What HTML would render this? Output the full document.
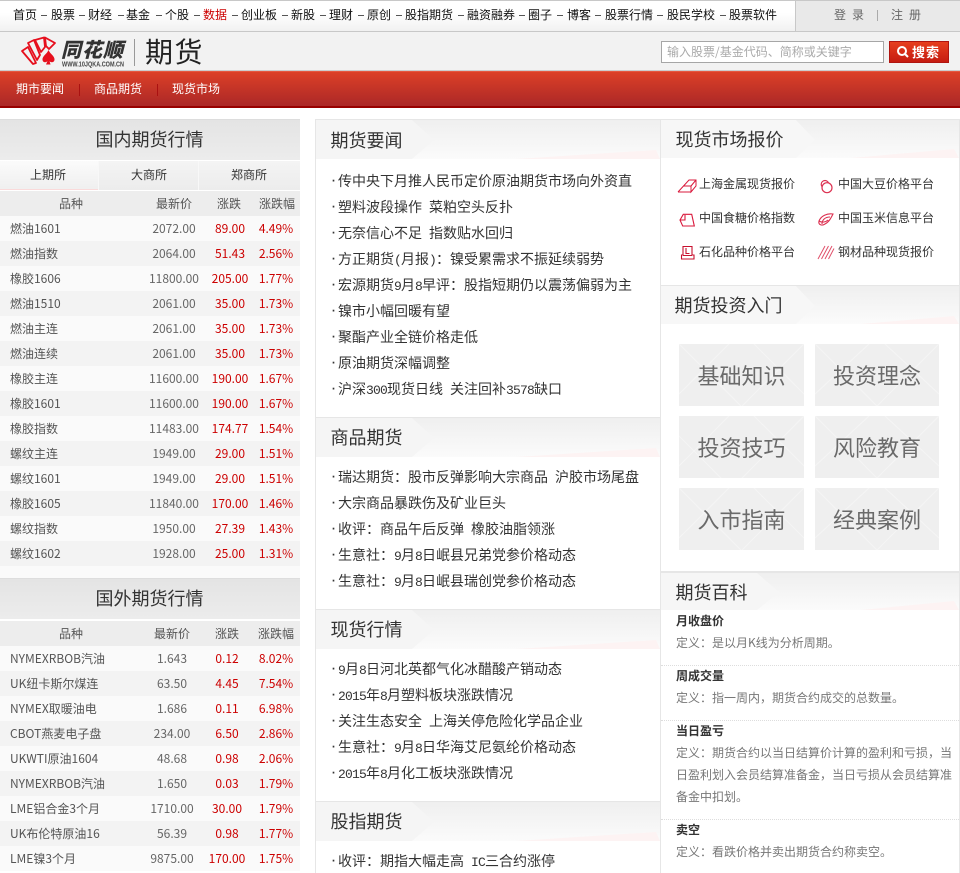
<!DOCTYPE html>
<html lang="zh"><head><meta charset="utf-8"><title>期货</title>
<style>
html,body{margin:0;padding:0}
body{width:960px;height:873px;overflow:hidden;position:relative;background:#fff;font:12px/20px "WenQuanYi Zen Hei","Noto Sans CJK SC",sans-serif;color:#333}
div,span,a{position:absolute;white-space:nowrap}
a{color:inherit;text-decoration:none}
.nv{top:5px;color:#111}
.dash{top:15px;width:6px;height:1px;background:#555}
.h18{font-size:18px;line-height:24px;color:#333;font-family:"Noto Sans CJK SC",sans-serif;font-weight:400;margin-left:-.5px}
.row{left:0;width:300px;height:25px;line-height:25px;color:#555}
.row span{top:0}
.o{background:#fafafa}.e{background:#f3f3f3}
.hd{background:#ededed;color:#555}
.row b{font:inherit}
.n{left:10px}
.p,.c,.f{text-align:center;width:100px}
.p{left:124px;color:#666}.c{left:180px;color:#c00}.f{left:226px;color:#c00}
.x .p{left:122px}.x .c{left:177px}.x .f{left:226px}
.li{left:338px;color:#333;font-size:14px}
.li::before{content:"·";position:absolute;left:-8px;top:0;font:bold 11.67px/20px "Liberation Mono",monospace}
tt{font:13px "Liberation Mono",monospace;letter-spacing:-.8px}
.ttl{height:39px;background:linear-gradient(#efefef,#fbfbfb)}
.ttl svg{position:absolute;left:0;top:0}
.tile{width:125px;height:62px;background:#efefef;overflow:hidden}
.tile svg{position:absolute;left:0;top:0}
.tile span{left:0;width:100%;top:16px;text-align:center;font:400 22px/30px "Noto Sans CJK SC",sans-serif;color:#6a6a6a}
.q{left:699px;color:#333}
.wk{left:676px;color:#333;font-weight:bold}
.df{left:676px;color:#777}
.dot{left:661px;width:298px;height:0;border-top:1px dotted #ddd}
.ic{position:absolute}
</style></head><body>

<!-- top bar -->
<div style="left:0;top:0;width:960px;height:30px;background:linear-gradient(#fff 40%,#f1f1f1);border-top:1px solid #c8c8c8;border-bottom:1px solid #c8c8c8"></div>
<div style="left:795px;top:1px;width:165px;height:30px;background:#e9e9e9;border-left:1px solid #c8c8c8"></div>
<a class="nv" style="left:13px">首页</a><i class="dash" style="position:absolute;left:41px"></i>
<a class="nv" style="left:51px">股票</a><i class="dash" style="position:absolute;left:79px"></i>
<a class="nv" style="left:88px">财经</a><i class="dash" style="position:absolute;left:118px"></i>
<a class="nv" style="left:126px">基金</a><i class="dash" style="position:absolute;left:156px"></i>
<a class="nv" style="left:165px">个股</a><i class="dash" style="position:absolute;left:194px"></i>
<a class="nv" style="left:203px;color:#c00">数据</a><i class="dash" style="position:absolute;left:232px"></i>
<a class="nv" style="left:241px">创业板</a><i class="dash" style="position:absolute;left:282px"></i>
<a class="nv" style="left:291px">新股</a><i class="dash" style="position:absolute;left:320px"></i>
<a class="nv" style="left:329px">理财</a><i class="dash" style="position:absolute;left:358px"></i>
<a class="nv" style="left:367px">原创</a><i class="dash" style="position:absolute;left:396px"></i>
<a class="nv" style="left:405px">股指期货</a><i class="dash" style="position:absolute;left:458px"></i>
<a class="nv" style="left:467px">融资融券</a><i class="dash" style="position:absolute;left:519px"></i>
<a class="nv" style="left:528px">圈子</a><i class="dash" style="position:absolute;left:557px"></i>
<a class="nv" style="left:567px">博客</a><i class="dash" style="position:absolute;left:595px"></i>
<a class="nv" style="left:605px">股票行情</a><i class="dash" style="position:absolute;left:657px"></i>
<a class="nv" style="left:667px">股民学校</a><i class="dash" style="position:absolute;left:720px"></i>
<a class="nv" style="left:729px">股票软件</a>
<a style="left:834px;top:5px;color:#666;letter-spacing:6px">登录</a>
<div style="left:877px;top:10px;width:1px;height:11px;background:#aaa"></div>
<a style="left:891px;top:5px;color:#666;letter-spacing:6px">注册</a>

<!-- logo bar -->
<div style="left:0;top:32px;width:960px;height:38px;background:#f2f2f2;border-bottom:1px solid #ccc"></div>
<svg class="ic" style="left:20px;top:36px" width="36" height="30" viewBox="0 0 36 30">
<g fill="none" stroke="#e60f1d" stroke-width="1.8" stroke-linejoin="round">
<path d="M2 15 L8 11 L16 27 L13 28 Z"/><path d="M8 7 L14 4 L20 19 L17 24 Z"/><path d="M15 4 L24 1.5 L25 11 L21 16 Z"/><path d="M25 1.5 L35 7 L29 13 L26 10 Z"/>
</g>
<path d="M28.500 14 C30 18 35 20 34.500 24 C34 27 30 26.500 29.500 25 L30.500 28.500 L26 28.500 L27.500 25 C26.500 26.500 23 27 22.500 24 C22 20 27 18 28.500 14 Z" fill="#e60f1d"/>
</svg>
<span style="left:61px;top:36px;font:italic 900 20px/26px 'Noto Sans CJK SC',sans-serif;color:#333;letter-spacing:1px">同花顺</span>
<svg class="ic" style="left:62px;top:60px" width="64" height="8"><text x="0" y="6.500" font-family="Liberation Sans" font-size="7" font-weight="bold" fill="#444" textLength="62" lengthAdjust="spacingAndGlyphs">WWW.10JQKA.COM.CN</text></svg>
<div style="left:134px;top:39px;width:1px;height:27px;background:#999"></div>
<span style="left:145px;top:32px;font:400 28px/38px 'Noto Sans CJK SC',sans-serif;color:#222;letter-spacing:1.500px">期货</span>

<div style="left:661px;top:41px;width:216px;height:20px;background:#fff;border:1px solid #a6a6a6;line-height:20px;color:#aaa;padding-left:5px">输入股票/基金代码、简称或关键字</div>
<div style="left:889px;top:41px;width:60px;height:22px;background:linear-gradient(#e8401f,#c41a10);box-shadow:inset 0 0 0 1px #b01510"></div>
<svg class="ic" style="left:896px;top:45px" width="14" height="14" viewBox="0 0 14 14"><circle cx="6" cy="6" r="4" fill="none" stroke="#fff" stroke-width="2"/><path d="M9 9 L12 12" stroke="#fff" stroke-width="2"/></svg>
<span style="left:912px;top:42px;font:bold 13px/20px 'Noto Sans CJK SC',sans-serif;color:#fff;letter-spacing:1px">搜索</span>

<!-- red nav -->
<div style="left:0;top:71px;width:960px;height:35px;background:linear-gradient(#dc4027,#aa2727);border-top:1px solid #e5573f"></div>
<div style="left:0;top:106px;width:960px;height:2px;background:#900"></div>
<a style="left:16px;top:79px;color:#fff">期市要闻</a>
<div style="left:79px;top:84px;width:1px;height:12px;background:#a11"></div>
<a style="left:94px;top:79px;color:#fff">商品期货</a>
<div style="left:157px;top:84px;width:1px;height:12px;background:#a11"></div>
<a style="left:172px;top:79px;color:#fff">现货市场</a>

<!-- left column -->
<div style="left:0;top:119px;width:300px;height:41px;background:linear-gradient(#e4e4e4,#ececec);border-top:1px solid #ddd;box-sizing:border-box"></div>
<span class="h18" style="left:96px;top:127px">国内期货行情</span>
<div style="left:0;top:161px;width:300px;height:29px;background:linear-gradient(#f4f4f4,#ececec)"></div>
<div style="left:0;top:161px;width:98px;height:29px;background:linear-gradient(#fbfbfb,#efefef)"></div>
<div style="left:98px;top:161px;width:1px;height:29px;background:#f8f8f8"></div>
<div style="left:198px;top:161px;width:1px;height:29px;background:#f8f8f8"></div>
<div style="left:0;top:189px;width:98px;height:1px;background:#fadada"></div>
<span style="left:30px;top:165px;color:#333">上期所</span>
<span style="left:131px;top:165px;color:#333">大商所</span>
<span style="left:231px;top:165px;color:#333">郑商所</span>

<div class="row hd" style="top:191px"><span style="left:59px">品种</span><span style="left:156px">最新价</span><span style="left:217px">涨跌</span><span style="left:259px">涨跌幅</span></div>
<div class="row o" style="top:216px"><span class="n">燃油<b>1601</b></span><span class="p">2072.00</span><span class="c">89.00</span><span class="f">4.49%</span></div>
<div class="row e" style="top:241px"><span class="n">燃油指数</span><span class="p">2064.00</span><span class="c">51.43</span><span class="f">2.56%</span></div>
<div class="row o" style="top:266px"><span class="n">橡胶<b>1606</b></span><span class="p">11800.00</span><span class="c">205.00</span><span class="f">1.77%</span></div>
<div class="row e" style="top:291px"><span class="n">燃油<b>1510</b></span><span class="p">2061.00</span><span class="c">35.00</span><span class="f">1.73%</span></div>
<div class="row o" style="top:316px"><span class="n">燃油主连</span><span class="p">2061.00</span><span class="c">35.00</span><span class="f">1.73%</span></div>
<div class="row e" style="top:341px"><span class="n">燃油连续</span><span class="p">2061.00</span><span class="c">35.00</span><span class="f">1.73%</span></div>
<div class="row o" style="top:366px"><span class="n">橡胶主连</span><span class="p">11600.00</span><span class="c">190.00</span><span class="f">1.67%</span></div>
<div class="row e" style="top:391px"><span class="n">橡胶<b>1601</b></span><span class="p">11600.00</span><span class="c">190.00</span><span class="f">1.67%</span></div>
<div class="row o" style="top:416px"><span class="n">橡胶指数</span><span class="p">11483.00</span><span class="c">174.77</span><span class="f">1.54%</span></div>
<div class="row e" style="top:441px"><span class="n">螺纹主连</span><span class="p">1949.00</span><span class="c">29.00</span><span class="f">1.51%</span></div>
<div class="row o" style="top:466px"><span class="n">螺纹<b>1601</b></span><span class="p">1949.00</span><span class="c">29.00</span><span class="f">1.51%</span></div>
<div class="row e" style="top:491px"><span class="n">橡胶<b>1605</b></span><span class="p">11840.00</span><span class="c">170.00</span><span class="f">1.46%</span></div>
<div class="row o" style="top:516px"><span class="n">螺纹指数</span><span class="p">1950.00</span><span class="c">27.39</span><span class="f">1.43%</span></div>
<div class="row e" style="top:541px"><span class="n">螺纹<b>1602</b></span><span class="p">1928.00</span><span class="c">25.00</span><span class="f">1.31%</span></div>
<div class="row o" style="top:566px;height:12px"></div>

<div style="left:0;top:578px;width:300px;height:41px;background:linear-gradient(#e4e4e4,#ececec);border-top:1px solid #ddd;box-sizing:border-box"></div>
<span class="h18" style="left:96px;top:586px">国外期货行情</span>
<div class="x">
<div class="row hd" style="top:621px"><span style="left:59px">品种</span><span style="left:154px">最新价</span><span style="left:215px">涨跌</span><span style="left:258px">涨跌幅</span></div>
<div class="row o" style="top:646px"><span class="n"><b>NYMEXRBOB</b>汽油</span><span class="p">1.643</span><span class="c">0.12</span><span class="f">8.02%</span></div>
<div class="row e" style="top:671px"><span class="n"><b>UK</b>纽卡斯尔煤连</span><span class="p">63.50</span><span class="c">4.45</span><span class="f">7.54%</span></div>
<div class="row o" style="top:696px"><span class="n"><b>NYMEX</b>取暖油电</span><span class="p">1.686</span><span class="c">0.11</span><span class="f">6.98%</span></div>
<div class="row e" style="top:721px"><span class="n"><b>CBOT</b>燕麦电子盘</span><span class="p">234.00</span><span class="c">6.50</span><span class="f">2.86%</span></div>
<div class="row o" style="top:746px"><span class="n"><b>UKWTI</b>原油<b>1604</b></span><span class="p">48.68</span><span class="c">0.98</span><span class="f">2.06%</span></div>
<div class="row e" style="top:771px"><span class="n"><b>NYMEXRBOB</b>汽油</span><span class="p">1.650</span><span class="c">0.03</span><span class="f">1.79%</span></div>
<div class="row o" style="top:796px"><span class="n"><b>LME</b>铝合金<b>3</b>个月</span><span class="p">1710.00</span><span class="c">30.00</span><span class="f">1.79%</span></div>
<div class="row e" style="top:821px"><span class="n"><b>UK</b>布伦特原油<b>16</b></span><span class="p">56.39</span><span class="c">0.98</span><span class="f">1.77%</span></div>
<div class="row o" style="top:846px"><span class="n"><b>LME</b>镍<b>3</b>个月</span><span class="p">9875.00</span><span class="c">170.00</span><span class="f">1.75%</span></div>
</div>

<!-- column frames -->
<div style="left:315px;top:119px;width:1px;height:754px;background:#e6e6e6"></div>
<div style="left:660px;top:119px;width:1px;height:754px;background:#e6e6e6"></div>
<div style="left:959px;top:119px;width:1px;height:754px;background:#e6e6e6"></div>
<div style="left:315px;top:119px;width:645px;height:1px;background:#e6e6e6"></div>

<!-- middle -->
<div class="ttl" style="left:316px;top:120px;width:344px"><svg width="344" height="39"><polygon points="0,0 96,0 118,20 96,39 0,39" fill="#f5f5f5"/><polygon points="200,39 340,30 344,39" fill="#fdf3f3"/></svg></div>
<span class="h18" style="left:331px;top:128px">期货要闻</span>
<a class="li" style="top:171px">传中央下月推人民币定价原油期货市场向外资直</a>
<a class="li" style="top:197px">塑料波段操作<tt> </tt>菜粕空头反扑</a>
<a class="li" style="top:223px">无奈信心不足<tt> </tt>指数贴水回归</a>
<a class="li" style="top:249px">方正期货<tt>(</tt>月报<tt>)</tt>：镍受累需求不振延续弱势</a>
<a class="li" style="top:275px">宏源期货<tt>9</tt>月<tt>8</tt>早评：股指短期仍以震荡偏弱为主</a>
<a class="li" style="top:301px">镍市小幅回暖有望</a>
<a class="li" style="top:327px">聚酯产业全链价格走低</a>
<a class="li" style="top:353px">原油期货深幅调整</a>
<a class="li" style="top:379px">沪深<tt>300</tt>现货日线<tt> </tt>关注回补<tt>3578</tt>缺口</a>

<div style="left:316px;top:417px;width:344px;height:1px;background:#e6e6e6"></div>
<div class="ttl" style="left:316px;top:418px;width:344px"><svg width="344" height="39"><polygon points="0,0 96,0 118,20 96,39 0,39" fill="#f5f5f5"/><polygon points="200,39 340,30 344,39" fill="#fdf3f3"/></svg></div>
<span class="h18" style="left:331px;top:425px">商品期货</span>
<a class="li" style="top:467px">瑞达期货：股市反弹影响大宗商品<tt> </tt>沪胶市场尾盘</a>
<a class="li" style="top:493px">大宗商品暴跌伤及矿业巨头</a>
<a class="li" style="top:519px">收评：商品午后反弹<tt> </tt>橡胶油脂领涨</a>
<a class="li" style="top:545px">生意社：<tt>9</tt>月<tt>8</tt>日岷县兄弟党参价格动态</a>
<a class="li" style="top:571px">生意社：<tt>9</tt>月<tt>8</tt>日岷县瑞创党参价格动态</a>

<div style="left:316px;top:609px;width:344px;height:1px;background:#e6e6e6"></div>
<div class="ttl" style="left:316px;top:610px;width:344px"><svg width="344" height="39"><polygon points="0,0 96,0 118,20 96,39 0,39" fill="#f5f5f5"/><polygon points="200,39 340,30 344,39" fill="#fdf3f3"/></svg></div>
<span class="h18" style="left:331px;top:617px">现货行情</span>
<a class="li" style="top:659px"><tt>9</tt>月<tt>8</tt>日河北英都气化冰醋酸产销动态</a>
<a class="li" style="top:685px"><tt>2015</tt>年<tt>8</tt>月塑料板块涨跌情况</a>
<a class="li" style="top:711px">关注生态安全<tt> </tt>上海关停危险化学品企业</a>
<a class="li" style="top:737px">生意社：<tt>9</tt>月<tt>8</tt>日华海艾尼氨纶价格动态</a>
<a class="li" style="top:763px"><tt>2015</tt>年<tt>8</tt>月化工板块涨跌情况</a>

<div style="left:316px;top:801px;width:344px;height:1px;background:#e6e6e6"></div>
<div class="ttl" style="left:316px;top:802px;width:344px"><svg width="344" height="39"><polygon points="0,0 96,0 118,20 96,39 0,39" fill="#f5f5f5"/><polygon points="200,39 340,30 344,39" fill="#fdf3f3"/></svg></div>
<span class="h18" style="left:331px;top:809px">股指期货</span>
<a class="li" style="top:851px">收评：期指大幅走高<tt> IC</tt>三合约涨停</a>

<!-- right -->
<div class="ttl" style="left:661px;top:120px;width:298px;height:38px"><svg width="298" height="38"><polygon points="0,0 135,0 154,20 135,38 0,38" fill="#f7f7f7"/><polygon points="190,38 293,29 298,38" fill="#fdf3f3"/></svg></div>
<span class="h18" style="left:676px;top:127px">现货市场报价</span>

<svg class="ic" style="left:677px;top:178px" width="20" height="16" viewBox="0 0 20 16"><path d="M1 14 H14 M1 14 L12 2 H19 V8 L14 14 V8 H6.500 M14 8 L19 2" fill="none" stroke="#d9183b" stroke-width="1"/></svg>
<a class="q" style="top:174px">上海金属现货报价</a>
<svg class="ic" style="left:819px;top:178px" width="16" height="16" viewBox="0 0 16 16"><circle cx="6" cy="6.300" r="3.800" fill="none" stroke="#dc3050" stroke-width="1.200"/><circle cx="8" cy="9.700" r="5" fill="#fff" stroke="#dc3050" stroke-width="1.200"/></svg>
<a class="q" style="left:838px;top:174px">中国大豆价格平台</a>

<svg class="ic" style="left:679px;top:212px" width="17" height="16" viewBox="0 0 17 16"><path d="M4.300 2.300 H12.700 L15.300 14 H3.700 L1 8 Z M1 8 H6 L6 3" fill="none" stroke="#d9183b" stroke-width="1.100"/></svg>
<a class="q" style="top:208px">中国食糖价格指数</a>
<svg class="ic" style="left:817px;top:211px" width="17" height="16" viewBox="0 0 17 16"><path d="M16 3 C10 2 4 5 2 10 C1 14 5 15 8 13 C12 11 14 7 16 3 Z M13 6 C8 6 5 9 5 13 M2 10 C5 12 9 11 11 9" fill="none" stroke="#dc3050" stroke-width="1.100"/></svg>
<a class="q" style="left:838px;top:208px">中国玉米信息平台</a>

<svg class="ic" style="left:680px;top:245px" width="15" height="15" viewBox="0 0 15 15"><path d="M3 1.500 H12 V10 H14 V14 H1.500 V10 H3 Z M3 10.500 H12 M6 3 V8.500 H9.500" fill="none" stroke="#c8102e" stroke-width="1.100"/></svg>
<a class="q" style="top:242px">石化品种价格平台</a>
<svg class="ic" style="left:817px;top:245px" width="18" height="15" viewBox="0 0 18 15"><path d="M1 14 L8 1 M4.500 14 L11.500 1 M8 14 L15 1 M11.500 14 L17 3.500" fill="none" stroke="#e0506a" stroke-width="1"/></svg>
<a class="q" style="left:838px;top:242px">钢材品种现货报价</a>

<div style="left:661px;top:285px;width:298px;height:1px;background:#e6e6e6"></div>
<div class="ttl" style="left:661px;top:286px;width:298px;height:38px"><svg width="298" height="38"><polygon points="0,0 135,0 154,20 135,38 0,38" fill="#f7f7f7"/><polygon points="200,38 293,30 298,38" fill="#fdf3f3"/></svg></div>
<span class="h18" style="left:675px;top:293px">期货投资入门</span>

<div class="tile" style="left:679px;top:344px"><svg width="125" height="62"><path d="M0 0 L62 62 M125 0 L63 62 M75 0 L125 50 M50 0 L0 50" stroke="#f5f5f5" fill="none"/></svg><span>基础知识</span></div>
<div class="tile" style="left:815px;top:344px;width:124px"><svg width="124" height="62"><path d="M0 0 L62 62 M124 0 L62 62 M70 0 L124 50 M54 0 L0 50" stroke="#f5f5f5" fill="none"/></svg><span>投资理念</span></div>
<div class="tile" style="left:679px;top:416px"><svg width="125" height="62"><path d="M0 20 L42 62 M125 0 L63 62 M75 0 L125 50 M50 0 L0 50" stroke="#f5f5f5" fill="none"/></svg><span>投资技巧</span></div>
<div class="tile" style="left:815px;top:416px;width:124px"><svg width="124" height="62"><path d="M0 0 L62 62 M124 0 L62 62 M70 0 L124 50 M54 0 L0 50" stroke="#f5f5f5" fill="none"/></svg><span>风险教育</span></div>
<div class="tile" style="left:679px;top:488px"><svg width="125" height="62"><path d="M0 0 L62 62 M125 0 L63 62 M75 0 L125 50 M50 0 L0 50" stroke="#f5f5f5" fill="none"/></svg><span>入市指南</span></div>
<div class="tile" style="left:815px;top:488px;width:124px"><svg width="124" height="62"><path d="M0 0 L62 62 M124 0 L62 62 M70 0 L124 50 M54 0 L0 50" stroke="#f5f5f5" fill="none"/></svg><span>经典案例</span></div>

<div style="left:661px;top:571px;width:298px;height:2px;background:#e6e6e6"></div>
<div class="ttl" style="left:661px;top:573px;width:298px;height:37px"><svg width="298" height="37"><polygon points="0,0 96,0 118,19 96,37 0,37" fill="#f6f6f6"/><polygon points="200,37 293,28 298,37" fill="#fdf3f3"/></svg></div>
<span class="h18" style="left:676px;top:580px">期货百科</span>

<a class="wk" style="top:611px">月收盘价</a>
<span class="df" style="top:633px">定义：是以月K线为分析周期。</span>
<div class="dot" style="top:665px"></div>
<a class="wk" style="top:666px">周成交量</a>
<span class="df" style="top:688px">定义：指一周内，期货合约成交的总数量。</span>
<div class="dot" style="top:720px"></div>
<a class="wk" style="top:721px">当日盈亏</a>
<span class="df" style="top:743px">定义：期货合约以当日结算价计算的盈利和亏损，当</span>
<span class="df" style="top:765px">日盈利划入会员结算准备金，当日亏损从会员结算准</span>
<span class="df" style="top:787px">备金中扣划。</span>
<div class="dot" style="top:819px"></div>
<a class="wk" style="top:820px">卖空</a>
<span class="df" style="top:842px">定义：看跌价格并卖出期货合约称卖空。</span>

</body></html>
